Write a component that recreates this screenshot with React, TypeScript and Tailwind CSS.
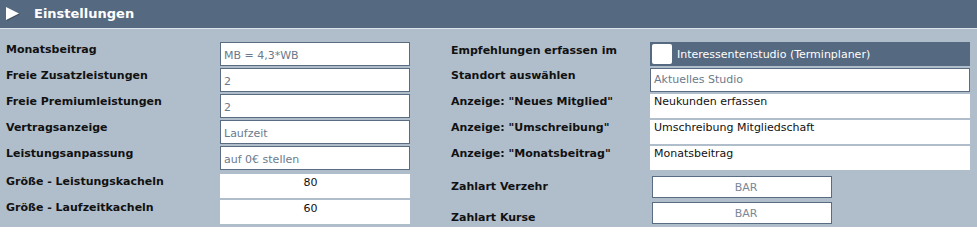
const labelCls = "text-[11px] leading-[13px] font-bold text-[#111]";

const InputBox = ({ value }: { value: string }) => (
  <div className="w-[190px] h-[24px] bg-white border border-[#5a6c82] pl-[3px] pt-[6px] text-[11px] leading-[13px] text-[#6b7a8b]">
    {value}
  </div>
);

const PlainBox = ({ value }: { value: string }) => (
  <div className="w-[190px] h-[24px] bg-white pt-[2px] pr-[9px] text-center text-[11px] leading-[13px] text-[#111]">
    {value}
  </div>
);

const TextBox = ({ value }: { value: string }) => (
  <div className="w-[320px] h-[24px] bg-white pl-[4px] pt-[1px] text-[11px] leading-[13px] text-[#111]">
    {value}
  </div>
);

const BarButton = () => (
  <div className="w-[180px] h-[22px] bg-white border border-[#5a6c82] flex items-center justify-center pl-[8px] text-[11px] leading-[13px] text-[#7b8897]">
    BAR
  </div>
);

const leftRows = [
  { label: "Monatsbeitrag", value: "MB = 4,3*WB" },
  { label: "Freie Zusatzleistungen", value: "2" },
  { label: "Freie Premiumleistungen", value: "2" },
  { label: "Vertragsanzeige", value: "Laufzeit" },
  { label: "Leistungsanpassung", value: "auf 0€ stellen" },
];

const App = () => {
  return (
    <div className="w-[977px] h-[227px] bg-[#b0bdca] font-['DejaVu_Sans',Verdana,sans-serif] overflow-hidden">
      {/* header */}
      <div className="h-[28px] bg-[#556981] flex items-center">
        <svg width="16" height="16" viewBox="0 0 16 16" className="ml-[5px] mt-[-1px]">
          <polygon points="2,2 15,8.5 2,15" fill="#2f3a47" opacity="0.45" />
          <polygon points="1,1 14,7.5 1,14" fill="#ffffff" />
        </svg>
        <span className="ml-[13px] text-[13px] font-bold text-white">Einstellungen</span>
      </div>
      <div className="h-px bg-[#dde3ea]" />

      <div className="flex pt-[13px]">
        {/* left column */}
        <div className="w-[451px] pl-[6px]">
          {leftRows.map((row) => (
            <div key={row.label} className="flex items-start h-[26px]">
              <div className={`w-[214px] mt-[1px] ${labelCls}`}>{row.label}</div>
              <InputBox value={row.value} />
            </div>
          ))}
          <div className="h-[2px]" />
          <div className="flex items-start h-[26px]">
            <div className={`w-[214px] mt-[1px] ${labelCls}`}>Größe - Leistungskacheln</div>
            <PlainBox value="80" />
          </div>
          <div className="flex items-start h-[26px]">
            <div className={`w-[214px] mt-[1px] ${labelCls}`}>Größe - Laufzeitkacheln</div>
            <PlainBox value="60" />
          </div>
        </div>

        {/* right column */}
        <div>
          <div className="flex items-start h-[26px]">
            <div className={`w-[199px] mt-[2px] ${labelCls}`}>Empfehlungen erfassen im</div>
            <div className="w-[320px] h-[24px] bg-[#556981] flex items-center">
              <div className="w-[20px] h-[20px] ml-[2px] bg-white rounded-[2px]" />
              <span className="ml-[5px] text-[11px] leading-[13px] text-white">
                Interessentenstudio (Terminplaner)
              </span>
            </div>
          </div>
          <div className="flex items-start h-[26px]">
            <div className={`w-[199px] mt-[1px] ${labelCls}`}>Standort auswählen</div>
            <div className="w-[320px] h-[24px] bg-white border border-[#5a6c82] pl-[3px] pt-[4px] text-[11px] leading-[13px] text-[#6b7a8b]">
              Aktuelles Studio
            </div>
          </div>
          <div className="flex items-start h-[26px]">
            <div className={`w-[199px] mt-[1px] ${labelCls}`}>Anzeige: "Neues Mitglied"</div>
            <TextBox value="Neukunden erfassen" />
          </div>
          <div className="flex items-start h-[26px]">
            <div className={`w-[199px] mt-[1px] ${labelCls}`}>Anzeige: "Umschreibung"</div>
            <TextBox value="Umschreibung Mitgliedschaft" />
          </div>
          <div className="flex items-start h-[30px]">
            <div className={`w-[199px] mt-[1px] ${labelCls}`}>Anzeige: "Monatsbeitrag"</div>
            <TextBox value="Monatsbeitrag" />
          </div>
          <div className="flex items-start h-[26px]">
            <div className={`w-[201px] mt-[4px] ${labelCls}`}>Zahlart Verzehr</div>
            <BarButton />
          </div>
          <div className="flex items-start h-[26px]">
            <div className={`w-[201px] mt-[9px] ${labelCls}`}>Zahlart Kurse</div>
            <BarButton />
          </div>
        </div>
      </div>
    </div>
  );
};

export default App;
